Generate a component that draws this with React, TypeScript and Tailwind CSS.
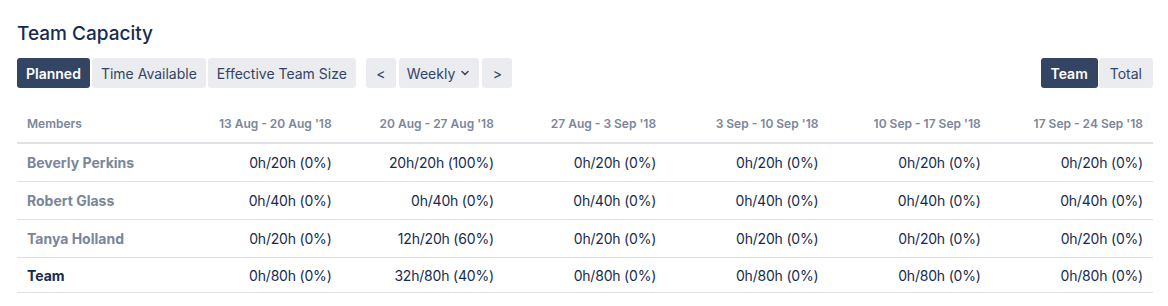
import React from 'react';
import { ChevronDown } from 'lucide-react';

const weeks = [
  "13 Aug - 20 Aug '18",
  "20 Aug - 27 Aug '18",
  "27 Aug - 3 Sep '18",
  "3 Sep - 10 Sep '18",
  "10 Sep - 17 Sep '18",
  "17 Sep - 24 Sep '18",
];

const rows = [
  { name: 'Beverly Perkins', cells: ['0h/20h (0%)', '20h/20h (100%)', '0h/20h (0%)', '0h/20h (0%)', '0h/20h (0%)', '0h/20h (0%)'] },
  { name: 'Robert Glass', cells: ['0h/40h (0%)', '0h/40h (0%)', '0h/40h (0%)', '0h/40h (0%)', '0h/40h (0%)', '0h/40h (0%)'] },
  { name: 'Tanya Holland', cells: ['0h/20h (0%)', '12h/20h (60%)', '0h/20h (0%)', '0h/20h (0%)', '0h/20h (0%)', '0h/20h (0%)'] },
];

const teamRow = ['0h/80h (0%)', '32h/80h (40%)', '0h/80h (0%)', '0h/80h (0%)', '0h/80h (0%)', '0h/80h (0%)'];

const Btn: React.FC<{ active?: boolean; className?: string; children: React.ReactNode }> = ({ active, className = 'px-[9px]', children }) => (
  <button
    className={`h-[30px] text-[14px] rounded-[3px] flex items-center ${
      active ? 'bg-[#344563] text-white font-semibold' : 'bg-[#ebecf0] text-[#344563]'
    } ${className}`}
  >
    {children}
  </button>
);

const App: React.FC = () => {
  return (
    <div className="bg-white min-h-[306px] pl-[17px] pr-[15px] pt-[22px] font-['Inter',sans-serif] text-[#172b4d]">
      <h2 className="text-[19px] leading-[24px] font-medium text-[#172b4d]">Team Capacity</h2>

      <div className="flex items-center justify-between mt-[12px]">
        <div className="flex items-center gap-[10px]">
          <div className="flex gap-[2px]">
            <Btn active>Planned</Btn>
            <Btn>Time Available</Btn>
            <Btn>Effective Team Size</Btn>
          </div>
          <div className="flex gap-[3px]">
            <Btn className="w-[30px] justify-center">&lt;</Btn>
            <Btn className="px-[8px] gap-[4px]">
              Weekly
              <ChevronDown className="w-3 h-3" strokeWidth={3} />
            </Btn>
            <Btn className="w-[30px] justify-center">&gt;</Btn>
          </div>
        </div>
        <div className="flex gap-[1px]">
          <Btn active className="px-[10px]">Team</Btn>
          <Btn className="px-[11px]">Total</Btn>
        </div>
      </div>

      <table className="w-full table-fixed mt-[18px] border-collapse">
        <thead>
          <tr className="border-b-2 border-[#dfe1e6]">
            <th className="text-left px-[10px] py-[10px] text-[12px] leading-[16px] font-semibold text-[#7a869a]">Members</th>
            {weeks.map((w) => (
              <th key={w} className="text-right px-[10px] py-[10px] text-[12px] leading-[16px] font-semibold text-[#7a869a]">
                {w}
              </th>
            ))}
          </tr>
        </thead>
        <tbody>
          {rows.map((r) => (
            <tr key={r.name} className="border-b border-[#dfe1e6]">
              <td className="px-[10px] py-[8px] text-[14px] leading-[21px] font-bold text-[#7a869a]">{r.name}</td>
              {r.cells.map((c, i) => (
                <td key={i} className="px-[10px] py-[8px] text-[14px] leading-[21px] tracking-[-0.2px] text-right text-[#172b4d]">
                  {c}
                </td>
              ))}
            </tr>
          ))}
          <tr className="border-b border-[#dfe1e6]">
            <td className="px-[10px] pt-[7px] pb-[6px] text-[14px] leading-[21px] font-bold text-[#172b4d]">Team</td>
            {teamRow.map((c, i) => (
              <td key={i} className="px-[10px] pt-[7px] pb-[6px] text-[14px] leading-[21px] tracking-[-0.2px] text-right text-[#172b4d]">
                {c}
              </td>
            ))}
          </tr>
        </tbody>
      </table>
    </div>
  );
};

export default App;
